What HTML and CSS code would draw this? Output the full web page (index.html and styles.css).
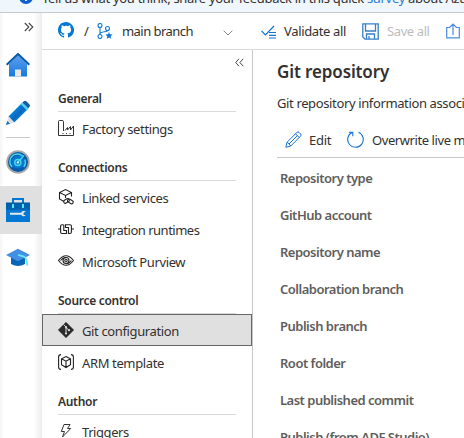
FILE: index.html
```
<!DOCTYPE html>
<html lang="en">
<head>
<meta charset="utf-8">
<title>Git repository</title>
<link rel="stylesheet" href="styles.css">
</head>
<body>
<div class="app">
  <div class="banner">
    <svg class="info" width="14" height="14" viewBox="0 0 14 14"><circle cx="7" cy="7" r="7" fill="#0b5fd0"/><path d="M7 6v5M7 3v1.600" stroke="#fff" stroke-width="1.800"/></svg>
    <span class="banner-text">Tell us what you think, share your feedback in this quick <a>survey</a> about Azure</span>
  </div>
  <div class="shell">
    <nav class="rail">
      <div class="rail-item expand"><svg width="10" height="10" viewBox="0 0 10 10" fill="none" stroke="#444" stroke-width="1.100"><path d="M.8 1l4 4-4 4M4.800 1l4 4-4 4"/></svg></div>
      <div class="rail-item home"><svg width="24" height="24" viewBox="0 0 24 24"><defs><linearGradient id="h" x1="0" y1="0" x2="0" y2="1"><stop offset="0" stop-color="#5ea0ef"/><stop offset="1" stop-color="#1779dc"/></linearGradient></defs><path d="M3 11l9-9 9 9v12.500H3z" fill="url(#h)"/><path d="M.7 11.800L12 1l11.300 10.800" fill="none" stroke="#0259a8" stroke-width="2"/><path d="M9 16.500h6v7H9z" fill="#e8e8e8"/></svg></div>
      <div class="rail-item pencil"><svg width="24" height="25" viewBox="0 0 24 25"><path d="M2.500 16.500L15.500 3.500l6 6-13.300 13z" fill="#0078d4"/><path d="M5 19L18 6l2 2L7 21z" fill="#1267bd"/><path d="M15.500 3.500l2.300-2.300q1.200-.9 2.500 0l3 3q1.300 1.300.1 2.700l-2.400 2.600z" fill="#125aa5"/><path d="M14.800 4.200l1.700-1.600 6 6-1.700 1.700z" fill="#50d4f2"/><path d="M2.500 16.500l6 6L0 25z" fill="#dedede"/><path d="M1.200 21l2.900 2.800L0 25z" fill="#1473c4"/></svg></div>
      <div class="rail-line"></div>
      <div class="rail-item monitor"><svg width="24" height="24" viewBox="0 0 24 24"><circle cx="12" cy="12" r="11.800" fill="#aaa"/><circle cx="12" cy="12" r="10" fill="#075baa"/><circle cx="12" cy="12" r="6.500" fill="#0877ce"/><g fill="none" stroke="#48d5ed" stroke-width="1.500"><path d="M6.200 17a7.500 7.500 0 1 1 10.400-11M18.700 9.500a7.500 7.500 0 0 1-1 7.500"/><circle cx="11.800" cy="12.500" r="3"/><path d="M12 12l6-6.500"/></g><circle cx="11.800" cy="12.500" r="1.200" fill="#c3f1ff"/></svg></div>
      <div class="rail-item manage"><svg width="24" height="24" viewBox="0 0 24 24"><defs><linearGradient id="t" x1="0" y1="0" x2="0" y2="1"><stop offset="0" stop-color="#005ba1"/><stop offset="1" stop-color="#0078d4"/></linearGradient></defs><path d="M7 6V1h10v5" fill="none" stroke="#0078d4" stroke-width="2"/><path d="M0 4.500h24V24H0z" fill="url(#t)"/><path d="M0 12h24v12H0z" fill="#0078d4"/><path d="M6 6h2v4H6zM16 6h2v4h-2z" fill="#50e6ff"/><path d="M4 14.700h11.200a3 3 0 0 1 4.600-1l-2.300 1v2l2.300.8a3 3 0 0 1-4.600-.7H4z" fill="#e8e8e8"/></svg></div>
      <div class="rail-item learn"><svg width="24" height="20" viewBox="0 0 24 20"><path d="M5 8h14v8q-7 4-14 0z" fill="#0765b5"/><path d="M12 .8L24 7l-12 6.200L0 7z" fill="#438fe4"/><path d="M12 6.800l6 1.800q3 2 3.200 9.200" fill="none" stroke="#66e5ff" stroke-width="1.800"/></svg></div>
    </nav>
    <div class="workspace">
      <header class="toolbar">
        <svg class="github" width="16" height="16" viewBox="0 0 16 16"><path fill="#0078d4" d="M8 0C3.580 0 0 3.580 0 8c0 3.540 2.290 6.530 5.470 7.590.4.070.55-.17.55-.38V13.720c-2.010.37-2.530-.49-2.690-.94-.09-.23-.48-.94-.82-1.130-.28-.15-.68-.52-.01-.53.63-.01 1.080.58 1.230.82.72 1.210 1.870.87 2.330.66.070-.52.28-.87.51-1.070-1.780-.2-3.640-.89-3.640-3.950 0-.87.31-1.590.82-2.150-.08-.2-.36-1.020.08-2.120 0 0 .67-.21 2.200.82A7.600 7.600 0 0 1 8 3.860c.68 0 1.360.09 2 .27 1.530-1.040 2.200-.82 2.200-.82.44 1.100.16 1.920.08 2.120.51.56.82 1.270.82 2.150 0 3.070-1.870 3.750-3.650 3.950.29.25.54.73.54 1.480v2.200c0 .21.15.46.55.38A8 8 0 0 0 8 0z"/></svg>
        <span class="slash">/</span>
        <svg class="branch" width="16" height="16" viewBox="0 0 16 16" fill="none" stroke="#1478d4" stroke-width="1.100"><circle cx="3" cy="2.500" r="2"/><circle cx="10.500" cy="5.500" r="2"/><circle cx="3" cy="13.500" r="2"/><path d="M3 4.500v7M10.500 7.500c0 2-7.500.5-7.500 3.500"/><path d="M12 9l1 2.300 2.700.2-2 1.700.6 2.600-2.300-1.400-2.300 1.400.6-2.600-2-1.700 2.700-.2z" fill="#1478d4" stroke="none"/></svg>
        <span class="main-branch">main branch</span>
        <svg class="caret" width="10" height="6" viewBox="0 0 10 6"><path d="M.7.700L5 5 9.300.700" fill="none" stroke="#888"/></svg>
        <svg class="validate" width="16" height="14" viewBox="0 0 16 14" fill="none" stroke="#1473cf" stroke-width="1.200"><path d="M.6 6l3.800 4L13 1M8 7.500h7M8 10.300h7M8 13h7"/></svg>
        <span class="validate-text">Validate all</span>
        <svg class="save" width="17" height="17" viewBox="0 0 17 17" fill="none" stroke="#347fc7" stroke-width="1.300"><path d="M.8.800h15.400v15.400H3L.8 14zM3.500 1v7h10V1M4.500 16v-5h8v5M7 13v3"/></svg>
        <span class="save-text">Save all</span>
        <svg class="export" width="14" height="16" viewBox="0 0 14 16" fill="none" stroke="#4d8de0" stroke-width="1.200"><path d="M4 4.500H.7v10.400h12.600V4.500H10M7 12V1M3.700 4.200L7 1l3.300 3.200"/></svg>
      </header>
      <div class="body">
        <aside class="side">
          <div class="collapse"><svg width="9" height="9" viewBox="0 0 9 9" fill="none" stroke="#444"><path d="M4 .8L.7 4.500 4 8.200M8.200.8L4.900 4.500l3.300 3.700"/></svg></div>
          <h2 class="group">General</h2>
          <div class="item"><svg width="16" height="16" viewBox="0 0 16 16" fill="none" stroke="#333" stroke-width="1"><path d="M.5 15.500V1.500q0-1 1-1H4q1.500 0 1.500 1V11M.5 15.500h15V6l-3 4V6.500L9.500 10V7.500L7 10.500"/><path d="M4.500 13.500h1M8 13.500h1M11.500 13.500h1"/></svg><span class="slight">Factory settings</span></div>
          <h2 class="group">Connections</h2>
          <div class="item"><svg width="16" height="16" viewBox="0 0 16 16" fill="none" stroke="#222" stroke-width="1.100"><path d="M6 12.500L1.500 10V3.500L7.500.6l6 2.900V7.500M1.500 3.500l6 3 6-3M7.500 6.500V9"/><rect x="5.500" y="10.500" width="6" height="3.300" rx="1.600" transform="rotate(-30 8 12)"/><rect x="9.500" y="10.500" width="6" height="3.300" rx="1.600" transform="rotate(30 12 12)"/></svg><span class="tight">Linked services</span></div>
          <div class="item"><svg width="16" height="16" viewBox="0 0 16 16" fill="none" stroke="#222" stroke-width="1.100"><path d="M0 8h2.500M13.500 8H16M5.500 3.800H4Q2.600 3.800 2.600 5v6q0 1.500 1.400 1.500h4.500V9.500H5.800V3.800M7.500 3.800H12q1.400 0 1.400 1.200v6q0 1.500-1.400 1.500h-1.500V6.500H7.500z"/></svg><span class="tighter">Integration runtimes</span></div>
          <div class="item"><svg width="16" height="16" viewBox="0 0 16 16" fill="none" stroke="#222" stroke-width="1.100"><path d="M.5 7.500Q8-2 15.500 7.500 8 17 .5 7.500z"/><path d="M2.500 7.500Q5 4.500 8 4.500M13.500 7.500Q11 10.800 8 10.800"/><circle cx="8" cy="7.500" r="3"/><circle cx="8" cy="7.500" r="1.200"/></svg><span class="slight">Microsoft Purview</span></div>
          <h2 class="group">Source control</h2>
          <div class="item selected"><svg width="16" height="16" viewBox="0 0 16 16"><path d="M8 .3L15.700 8 8 15.700.3 8z" fill="#2b2b2b" stroke="#2b2b2b" stroke-width=".6" stroke-linejoin="round"/><path d="M5.500 2.500L8 5v6.500M8 5.500l3 2.800" stroke="#ddd" fill="none"/><circle cx="8" cy="5.200" r="1.100" fill="#ddd"/><circle cx="11" cy="8.200" r="1.100" fill="#ddd"/><circle cx="8" cy="11.500" r="1.100" fill="#ddd"/></svg><span class="slight">Git configuration</span></div>
          <div class="item"><svg width="16" height="16" viewBox="0 0 16 16" fill="none" stroke="#222" stroke-width="1.100"><path d="M3 .6Q.6.600.6 3v10q0 2.400 2.400 2.400M13 .6q2.400 0 2.400 2.400v10q0 2.400-2.400 2.400M8 2.500l4.500 2.300v6L8 13.500l-4.500-2.700v-6zM3.500 4.800L8 7.200l4.500-2.400M8 7.200v6.300"/></svg><span class="slight">ARM template</span></div>
          <h2 class="group">Author</h2>
          <div class="item"><svg width="16" height="16" viewBox="0 0 16 16" fill="none" stroke="#333"><path d="M6 1.500h6L9.500 5.500h3.200L4.500 14l2-5.500H3.300z"/></svg><span class="tight">Triggers</span></div>
        </aside>
        <main class="content">
          <h1>Git repository</h1>
          <p><span class="slight">Git repository information associated with your factory</span></p>
          <div class="commands">
            <svg class="edit" width="17" height="17" viewBox="0 0 17 17" fill="none" stroke="#1473cf" stroke-width="1"><path d="M.8 16.200l1.300-5L12 1.300q1-.8 2 0l1.700 1.700q.8 1 0 2L5.800 15zM10.500 2.800l3.700 3.700M2.100 11.200l3.700 3.700M4 13l8.300-8.300"/></svg>
            <span class="edit-text">Edit</span>
            <svg class="refresh" width="17" height="17" viewBox="0 0 17 17" fill="none" stroke="#1473cf" stroke-width="1.100"><path d="M11.500 1.300a7.800 7.800 0 1 1-6.500.2M1.800 1.200h4v4"/></svg>
            <span class="over-text tight">Overwrite live mode</span>
          </div>
          <div class="fields">
            <div>Repository type</div>
            <div>GitHub account</div>
            <div>Repository name</div>
            <div>Collaboration branch</div>
            <div>Publish branch</div>
            <div>Root folder</div>
            <div>Last published commit</div>
            <div>Publish (from ADF Studio)</div>
          </div>
        </main>
      </div>
    </div>
  </div>
</div>
</body>
</html>
```
FILE: styles.css
```
* { box-sizing: border-box; }
body { margin: 0; overflow: hidden; background: #fff; color: #323130; font: 13px/18px "Noto Sans", "Open Sans", sans-serif; letter-spacing: -.25px; }
svg { display: block; flex: none; }
h1, h2, p { margin: 0; }
span { white-space: nowrap; }
.slight { letter-spacing: -.37px; }
.tight { letter-spacing: -.42px; }
.tighter { letter-spacing: -.5px; }
.app { width: 464px; height: 438px; overflow: hidden; display: flex; flex-direction: column; }
.banner { height: 13px; flex: none; background: #eff6fc; border-bottom: 1px solid #c8c8c8; display: flex; align-items: flex-end; padding: 0 0 8px 19px; overflow: hidden; }
.banner-text { margin: 0 0 -3px 9px; letter-spacing: -.31px; }
.banner a { color: #2b7cd3; }
.shell { display: flex; flex: 1; min-height: 0; }
.rail { width: 42px; flex: none; background: linear-gradient(90deg, #f5f5f5, #fff 4px, #fff 34px, #ececec); display: flex; flex-direction: column; }
.rail-item { height: 48px; flex: none; padding-left: 6px; display: flex; align-items: center; }
.expand { height: 28px; padding-left: 24px; }
.home { height: 47px; }
.pencil { height: 49px; }
.rail-line { height: 1px; flex: none; background: #c8c8c8; width: 24px; margin-left: 6px; }
.monitor { padding-bottom: 1px; }
.manage { background: #e0e0e0; }
.workspace { flex: 1; min-width: 0; display: flex; flex-direction: column; }
.toolbar { height: 37px; flex: none; border-bottom: 1px solid #dadada; display: flex; align-items: center; padding-left: 16px; overflow: hidden; }
.github { margin-top: -2px; }
.slash { margin-left: 10px; width: 13px; }
.main-branch { margin-left: 9px; width: 101px; letter-spacing: -.55px; }
.caret { margin-top: 3px; }
.validate { margin: 2px 0 0 28px; }
.validate-text { margin-left: 7px; width: 78px; letter-spacing: -.35px; }
.save-text { margin-left: 8px; width: 59px; color: #bdbdbd; letter-spacing: -.4px; }
.body { flex: 1; min-height: 0; display: flex; }
.side { width: 211px; flex: none; border-right: 1px solid #c8c8c8; overflow: hidden; }
.collapse { height: 25px; display: flex; justify-content: flex-end; align-items: center; padding-right: 8px; }
.group { height: 37px; margin: 0 16px; border-bottom: 1px solid #dadada; padding-top: 14.5px; font-size: 12px; line-height: 18px; font-weight: 600; letter-spacing: -.3px; }
.item { height: 32px; padding: 1px 0 0 16px; display: flex; align-items: center; gap: 8px; }
.item svg { margin-top: -1px; }
.selected { background: #e0e0e0; border: 1px solid #666; padding: 1px 0 0 15px; }
.content { flex: 1; min-width: 0; padding-left: 24px; overflow: hidden; }
h1 { font-size: 17px; line-height: 24px; font-weight: 600; padding-top: 10px; letter-spacing: -.12px; }
p { padding-top: 10px; }
.commands { height: 46px; border-bottom: 1px solid #c8c8c8; display: flex; align-items: center; padding: 10px 0 0 8px; }
.edit-text { flex: none; margin-left: 7px; width: 31px; }
.refresh { margin-left: 7px; }
.over-text { margin-left: 8px; }
.fields { padding: 1px 0 0 3px; color: #605e5c; font-weight: 600; letter-spacing: -.5px; }
.fields div { height: 37px; display: flex; align-items: center; white-space: nowrap; }
```
